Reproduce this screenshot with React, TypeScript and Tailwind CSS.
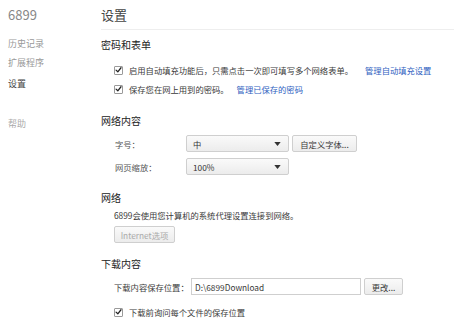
import React from "react";

const font = { fontFamily: '"Noto Sans CJK SC", "Liberation Sans", sans-serif' };

function Check() {
  return (
    <span className="flex w-[9px] h-[9px] items-center justify-center border border-[#9a9a9a] bg-white rounded-[1px] shrink-0">
      <svg viewBox="0 0 10 10" className="w-[8px] h-[8px]">
        <path d="M1.5 5.2 L4 7.6 L8.6 1.8" fill="none" stroke="#222" strokeWidth="1.8" strokeLinecap="round" strokeLinejoin="round" />
      </svg>
    </span>
  );
}

function Select({ value, w }: { value: string; w: string }) {
  return (
    <div
      className={`${w} h-[17px] flex items-center justify-between px-[6px] border border-[#cfcfcf] rounded-[2px] bg-gradient-to-b from-[#fafafa] to-[#ececec] text-[#333]`}
    >
      <span>{value}</span>
      <svg viewBox="0 0 8 5" className="w-[7px] h-[4px] mr-[1px]">
        <path d="M0 0 H8 L4 5 Z" fill="#333" />
      </svg>
    </div>
  );
}

function Btn({ children, className = "" }: { children: React.ReactNode; className?: string }) {
  return (
    <div
      className={`h-[17px] flex items-center justify-center border border-[#cfcfcf] rounded-[2px] bg-gradient-to-b from-[#fafafa] to-[#ececec] ${className}`}
    >
      {children}
    </div>
  );
}

export default function App() {
  return (
    <div
      className="w-[454px] h-[333px] bg-white flex text-[8.3px] leading-[14px] text-[#3a3a3a] whitespace-nowrap overflow-hidden"
      style={font}
    >
      {/* sidebar */}
      <div className="w-[101px] shrink-0 pl-[8px] text-[9px]">
        <div className="h-[30px] flex items-center text-[13px] text-[#888]">6899</div>
        <div className="mt-[7px] text-[#999]">历史记录</div>
        <div className="mt-[5px] text-[#999]">扩展程序</div>
        <div className="mt-[7px] text-[#444]">设置</div>
        <div className="mt-[26px] text-[#aaa]">帮助</div>
      </div>

      {/* main */}
      <div className="flex-1 flex flex-col">
        <div className="h-[30px] flex items-center border-b border-[#eeeeee] text-[13px] text-[#444]">设置</div>

        <div className="mt-[8px] text-[10px] text-[#222]">密码和表单</div>
        <div className="mt-[11px] ml-[13px] flex items-center gap-[6px]">
          <Check />
          <span>启用自动填充功能后，只需点击一次即可填写多个网络表单。</span>
          <span className="ml-[6px] text-[#2f5fbf]">管理自动填充设置</span>
        </div>
        <div className="mt-[5px] ml-[13px] flex items-center gap-[6px]">
          <Check />
          <span>保存您在网上用到的密码。</span>
          <span className="ml-[2px] text-[#2f5fbf]">管理已保存的密码</span>
        </div>

        <div className="mt-[18px] text-[10px] text-[#222]">网络内容</div>
        <div className="mt-[7px] ml-[14px] flex items-center">
          <span className="w-[71px] text-[#555]">字号：</span>
          <Select value="中" w="w-[103px]" />
          <Btn className="ml-[3px] w-[65px]">自定义字体...</Btn>
        </div>
        <div className="mt-[6px] ml-[14px] flex items-center">
          <span className="w-[71px] text-[#555]">网页缩放：</span>
          <Select value="100%" w="w-[103px]" />
        </div>

        <div className="mt-[16px] text-[10px] text-[#222]">网络</div>
        <div className="mt-[3px] ml-[13px]">6899会使用您计算机的系统代理设置连接到网络。</div>
        <Btn className="mt-[4px] ml-[13px] w-[61px] text-[#aaa]">Internet选项</Btn>

        <div className="mt-[14px] text-[10px] text-[#222]">下载内容</div>
        <div className="mt-[7px] ml-[13px] flex items-center">
          <span className="w-[77px]">下载内容保存位置：</span>
          <div className="w-[170px] h-[17px] flex items-center px-[3px] border border-[#cfcfcf] bg-white">D:\6899Download</div>
          <Btn className="ml-[3px] w-[39px]">更改...</Btn>
        </div>
        <div className="mt-[10px] ml-[13px] flex items-center gap-[6px]">
          <Check />
          <span>下载前询问每个文件的保存位置</span>
        </div>
      </div>
    </div>
  );
}
